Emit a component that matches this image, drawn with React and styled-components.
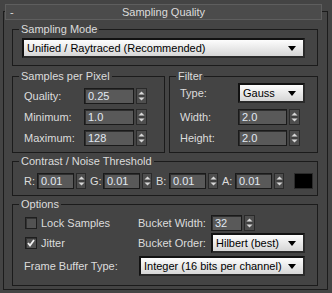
import React from "react";
import styled, { createGlobalStyle } from "styled-components";

const GlobalStyle = createGlobalStyle`
    html, body {
        margin: 0;
        background: #444444;
    }
    body {
        font-family: "Liberation Sans", Arial, sans-serif;
        font-size: 11px;
        color: #dcdcdc;
    }
`;

const Page = styled.div`
    width: 332px;
    height: 293px;
    box-sizing: border-box;
    padding-top: 11px;
    background: #444444;
    overflow: hidden;
`;

const Frame = styled.div`
    margin: 0 4px 0 3px;
    border: 1px solid #1c1c1c;
    padding-bottom: 3px;
`;

const TitleBar = styled.div`
    display: grid;
    grid-template-columns: 1fr auto 1fr;
    align-items: center;
    height: 14px;
    margin: -8px 5px 0 1px;
    background: #4b4b4b;
    border: 1px solid #5e5e5e;
    color: #dcdcdc;
    line-height: 14px;

    .collapse {
        padding-left: 4px;
    }
`;

const Groups = styled.div`
    display: flex;
    flex-direction: column;
    gap: 2px;
    padding: 3px 9px 0 8px;
`;

const Pair = styled.div`
    display: grid;
    grid-template-columns: 153px 149px;
    gap: 4px;
    margin-top: 2px;
`;

const Group = styled.fieldset`
    margin: 0;
    min-width: 0;
    padding: 0;
    border: 1px solid #1b1b1b;
`;

const Legend = styled.legend`
    margin-left: 6px;
    padding: 0 2px;
    line-height: 12px;
    color: #dcdcdc;
`;

const Body = styled.div`
    padding: ${(p) => p.$pad};
    display: flex;
    flex-direction: column;
    gap: ${(p) => p.$gap || "5px"};
`;

const Row = styled.div`
    display: flex;
    align-items: center;
    height: ${(p) => p.$h || "16px"};
    margin-top: ${(p) => p.$mt || "0"};
`;

const Label = styled.span`
    width: ${(p) => p.$w};
    flex: none;
    white-space: nowrap;
    color: #dcdcdc;
`;

const Field = styled.div`
    box-sizing: border-box;
    width: ${(p) => p.$w};
    height: 16px;
    flex: none;
    background: #595959;
    border: 1px solid #1a1a1a;
    box-shadow: inset 1px 1px 0 #2e2e2e;
    color: #e2e9f3;
    padding-left: 3px;
    line-height: 14px;
`;

const SpinBox = styled.div`
    box-sizing: border-box;
    width: ${(p) => p.$w || "11px"};
    height: 16px;
    margin: 0 ${(p) => p.$mr || "0"} 0 2px;
    flex: none;
    background: #4e4e4e;
    border: 1px solid #2a2a2a;
    display: flex;
    align-items: center;
    justify-content: center;
`;

const Select = styled.div`
    box-sizing: border-box;
    width: ${(p) => p.$w || "100%"};
    height: 20px;
    flex: none;
    display: flex;
    align-items: center;
    justify-content: space-between;
    padding: 0 7px 0 3px;
    background: linear-gradient(#fdfdfd, #d6d6d6);
    border: 2px solid #121212;
    border-right-color: #2a2a2a;
    border-bottom-color: #2a2a2a;
    color: #000;
    white-space: nowrap;
`;

const Swatch = styled.div`
    width: 17px;
    height: 14px;
    margin-left: 10px;
    background: #000;
    border: 1px solid #2b2b2b;
`;

const OptionsGrid = styled.div`
    display: grid;
    grid-template-columns: 114px 73px 1fr;
    align-items: center;
    padding: 5px 12px 9px 11px;
    row-gap: 2px;

    .wide {
        grid-column: 2 / 4;
        margin-top: 1px;
        padding-left: 1px;
    }
`;

const Check = styled.span`
    display: flex;
    align-items: center;
    gap: 4px;
    padding-left: 1px;
    white-space: nowrap;
`;

const Box = styled.span`
    box-sizing: border-box;
    width: 12px;
    height: 12px;
    background: #525252;
    border: 1px solid #1e1e1e;
    box-shadow: inset 1px 1px 0 #333;
    display: flex;
    align-items: center;
    justify-content: center;
`;

const Spinner = ({ w, mr }) => (
    <SpinBox $w={w} $mr={mr}>
        <svg width="7" height="12" viewBox="0 0 7 12">
            <path d="M3.5 1.5 L6.5 4.5 H0.5 Z" fill="#d8d8d8" />
            <path d="M0.5 6 H6.5" stroke="#333" strokeWidth="1" />
            <path d="M0.5 7.5 H6.5 L3.5 10.5 Z" fill="#d8d8d8" />
        </svg>
    </SpinBox>
);

const Arrow = () => (
    <svg width="8" height="5" viewBox="0 0 8 5">
        <path d="M0 0 H8 L4 5 Z" fill="#000" />
    </svg>
);

const Dropdown = ({ w, children }) => (
    <Select $w={w}>
        <span>{children}</span>
        <Arrow />
    </Select>
);

const Checkbox = ({ checked, children }) => (
    <Check>
        <Box>
            {checked && (
                <svg width="8" height="8" viewBox="0 0 8 8">
                    <path d="M1 4 L3 6.5 L7 1" fill="none" stroke="#f2f2f2" strokeWidth="1.8" />
                </svg>
            )}
        </Box>
        {children}
    </Check>
);

const thresholds = ["R", "G", "B", "A"];

export default function App() {
    return (
        <>
            <GlobalStyle />
            <Page>
                <Frame>
                    <TitleBar>
                        <span className="collapse">-</span>
                        <span>Sampling Quality</span>
                        <span />
                    </TitleBar>

                    <Groups>
                        <Group>
                            <Legend>Sampling Mode</Legend>
                            <Body $pad="3px 12px 7px 9px">
                                <Dropdown>Unified / Raytraced (Recommended)</Dropdown>
                            </Body>
                        </Group>

                        <Pair>
                            <Group>
                                <Legend>Samples per Pixel</Legend>
                                <Body $pad="6px 0 6px 11px">
                                    <Row>
                                        <Label $w="60px">Quality:</Label>
                                        <Field $w="50px">0.25</Field>
                                        <Spinner />
                                    </Row>
                                    <Row>
                                        <Label $w="60px">Minimum:</Label>
                                        <Field $w="50px">1.0</Field>
                                        <Spinner />
                                    </Row>
                                    <Row>
                                        <Label $w="60px">Maximum:</Label>
                                        <Field $w="50px">128</Field>
                                        <Spinner />
                                    </Row>
                                </Body>
                            </Group>

                            <Group>
                                <Legend>Filter</Legend>
                                <Body $pad="1px 0 6px 10px">
                                    <Row $h="20px">
                                        <Label $w="58px">Type:</Label>
                                        <Dropdown w="67px">Gauss</Dropdown>
                                    </Row>
                                    <Row $mt="1px">
                                        <Label $w="58px">Width:</Label>
                                        <Field $w="49px">2.0</Field>
                                        <Spinner />
                                    </Row>
                                    <Row>
                                        <Label $w="58px">Height:</Label>
                                        <Field $w="49px">2.0</Field>
                                        <Spinner />
                                    </Row>
                                </Body>
                            </Group>
                        </Pair>

                        <Group>
                            <Legend>Contrast / Noise Threshold</Legend>
                            <Body $pad="6px 0 6px 11px">
                                <Row>
                                    {thresholds.map((c, i) => (
                                        <React.Fragment key={c}>
                                            <Label $w="13px">{c}:</Label>
                                            <Field $w="37px">0.01</Field>
                                            <Spinner w="10px" mr={i < 3 ? "4px" : "0"} />
                                        </React.Fragment>
                                    ))}
                                    <Swatch />
                                </Row>
                            </Body>
                        </Group>

                        <Group>
                            <Legend>Options</Legend>
                            <OptionsGrid>
                                <Checkbox>Lock Samples</Checkbox>
                                <Label>Bucket Width:</Label>
                                <Row>
                                    <Field $w="31px">32</Field>
                                    <Spinner />
                                </Row>

                                <Checkbox checked>Jitter</Checkbox>
                                <Label>Bucket Order:</Label>
                                <Dropdown>Hilbert (best)</Dropdown>

                                <Label>Frame Buffer Type:</Label>
                                <div className="wide">
                                    <Dropdown>Integer (16 bits per channel)</Dropdown>
                                </div>
                            </OptionsGrid>
                        </Group>
                    </Groups>
                </Frame>
            </Page>
        </>
    );
}
